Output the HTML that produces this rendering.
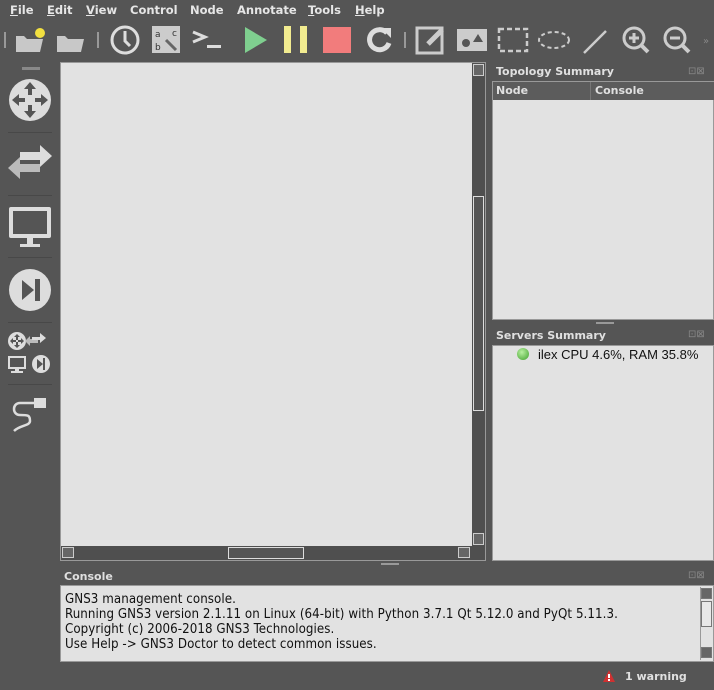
<!DOCTYPE html>
<html><head><style>
*{margin:0;padding:0;box-sizing:border-box}
body{width:714px;height:690px;background:#555;position:relative;overflow:hidden;font-family:"DejaVu Sans","Liberation Sans",sans-serif;color:#e8e8e8}
.a{position:absolute}
.menu{top:3px;font-size:11.5px;font-weight:bold;color:#e6e6e6}
.t{font-size:11px;font-weight:bold;color:#e0e0e0}
.con{font-family:"DejaVu Sans Condensed","DejaVu Sans","Liberation Sans",sans-serif;font-size:13.2px;letter-spacing:0.07px;color:#111;line-height:15px}
</style></head><body>
<div class="a menu" style="left:10px"><u>F</u>ile</div>
<div class="a menu" style="left:47px"><u>E</u>dit</div>
<div class="a menu" style="left:86px"><u>V</u>iew</div>
<div class="a menu" style="left:130px">Control</div>
<div class="a menu" style="left:190px">Node</div>
<div class="a menu" style="left:237px">Annotate</div>
<div class="a menu" style="left:308px"><u>T</u>ools</div>
<div class="a menu" style="left:355px"><u>H</u>elp</div>

<svg class="a" style="left:0;top:22px" width="714" height="38">
<g fill="#999"><rect x="4" y="10" width="2" height="16"/><rect x="97" y="10" width="2" height="16"/><rect x="404" y="10" width="2" height="16"/></g>
<path d="M16 14h8l3 3h16l-3 13H16z" fill="#c8c8c8"/><circle cx="40" cy="11" r="5" fill="#f2e040"/>
<path d="M57 14h8l3 3h16l-3 13H57z" fill="#c8c8c8"/>
<circle cx="125" cy="18" r="13" fill="none" stroke="#ddd" stroke-width="3"/><path d="M125 9v10l5 5" stroke="#ddd" stroke-width="3" fill="none"/>
<rect x="152" y="4" width="28" height="27" fill="#ccc"/><text x="155" y="15" font-size="9" fill="#333">a</text><text x="172" y="14" font-size="9" fill="#333">c</text><text x="155" y="28" font-size="9" fill="#333">b</text><path d="M166 18l10 10" stroke="#666" stroke-width="3"/>
<path d="M193 10l12 5-12 5" stroke="#ddd" stroke-width="3" fill="none"/><rect x="207" y="23" width="14" height="3" fill="#ddd"/>
<path d="M245 5l22 13-22 13z" fill="#7fcf8f"/>
<rect x="284" y="4" width="7" height="27" fill="#f2ec90"/><rect x="300" y="4" width="7" height="27" fill="#f2ec90"/>
<rect x="323" y="5" width="28" height="26" fill="#f27c7c"/>
<path d="M387 11a10 10 0 1 0 2 10" stroke="#ddd" stroke-width="5" fill="none"/><path d="M381 6l10 0 0 10z" fill="#ddd"/>
<rect x="417" y="6" width="25" height="25" fill="none" stroke="#ccc" stroke-width="3"/><path d="M428 22l14-14" stroke="#ccc" stroke-width="5"/>
<rect x="457" y="7" width="30" height="22" fill="#ccc"/><circle cx="466" cy="21" r="4" fill="#555"/><path d="M473 20l5-8 5 8z" fill="#555"/>
<rect x="499" y="7" width="28" height="22" fill="none" stroke="#ccc" stroke-width="2.5" stroke-dasharray="5 3"/>
<ellipse cx="554" cy="18" rx="15" ry="8" fill="none" stroke="#ccc" stroke-width="2" stroke-dasharray="4 3"/>
<path d="M584 31l22-22" stroke="#ccc" stroke-width="2.5"/>
<circle cx="634" cy="16" r="10" fill="none" stroke="#ccc" stroke-width="3"/><path d="M641 23l7 7" stroke="#ccc" stroke-width="4"/><path d="M629 16h10M634 11v10" stroke="#ccc" stroke-width="3"/>
<circle cx="675" cy="16" r="10" fill="none" stroke="#ccc" stroke-width="3"/><path d="M682 23l7 7" stroke="#ccc" stroke-width="4"/><path d="M670 16h10" stroke="#ccc" stroke-width="3"/>
<text x="703" y="22" font-size="10" fill="#888">»</text>
</svg>

<svg class="a" style="left:0;top:60px" width="60" height="390">
<rect x="22" y="7" width="18" height="3" fill="#888"/>
<circle cx="30" cy="40" r="21" fill="#ddd"/>
<g fill="#555"><path d="M30 22l6 7h-4v6h-4v-6h-4zM30 58l6-7h-4v-6h-4v6h-4zM12 40l7-6v4h6v4h-6v4zM48 40l-7-6v4h-6v4h6v4z"/></g>
<rect x="8" y="72" width="44" height="1" fill="#484848"/>
<path d="M20 92h20v-7l12 11-12 11v-7H20z" fill="#ddd"/><path d="M40 104H20v-7L8 108l12 11v-7h20z" fill="#bbb"/>
<rect x="8" y="135" width="44" height="1" fill="#484848"/>
<rect x="9" y="147" width="42" height="31" rx="2" fill="#ddd"/><rect x="13" y="151" width="34" height="23" fill="#555"/><rect x="27" y="178" width="6" height="6" fill="#ddd"/><rect x="20" y="184" width="20" height="3" fill="#ddd"/>
<rect x="8" y="197" width="44" height="1" fill="#484848"/>
<circle cx="30" cy="230" r="21" fill="#ddd"/><path d="M22 220l12 10-12 10z" fill="#555"/><rect x="35" y="219" width="5" height="22" fill="#555"/>
<rect x="8" y="262" width="44" height="1" fill="#484848"/>
<circle cx="17" cy="281" r="9" fill="#ddd"/><g fill="#555"><path d="M17 274l3 3h-2v3h-2v-3h-2zM17 288l3-3h-2v-3h-2v3h-2zM10 281l3-3v2h3v2h-3v2zM24 281l-3-3v2h-3v2h3v2z"/></g>
<path d="M38 279h-8v-3l-5 5 5 5v-3h8z" fill="#bbb"/><path d="M32 277h8v-4l6 5-6 5v-3h-8z" fill="#ddd"/>
<rect x="8" y="296" width="18" height="13" fill="#ddd"/><rect x="10" y="298" width="14" height="9" fill="#555"/><rect x="15" y="309" width="4" height="2" fill="#ddd"/><rect x="11" y="311" width="12" height="2" fill="#ddd"/>
<circle cx="41" cy="304" r="9" fill="#ddd"/><path d="M37 299l6 5-6 5z" fill="#555"/><rect x="43" y="298" width="2" height="12" fill="#555"/>
<rect x="8" y="324" width="44" height="1" fill="#484848"/>
<rect x="34" y="338" width="12" height="10" fill="#ddd"/><path d="M34 343h-14c-8 0-8 12 0 12c8 0 10 0 10 6c0 5-10 4-16 10" stroke="#ddd" stroke-width="2.5" fill="none"/>
</svg>

<div class="a" style="left:60px;top:62px;width:426px;height:499px;border:1px solid #999;background:#4f4f4f"></div>
<div class="a" style="left:61px;top:63px;width:411px;height:483px;background:#e2e2e2"></div>
<div class="a" style="left:473px;top:64px;width:11px;height:12px;border:1px solid #ccc;background:#666"></div>
<div class="a" style="left:473px;top:196px;width:11px;height:215px;border:1px solid #ddd;background:#555"></div>
<div class="a" style="left:473px;top:533px;width:11px;height:12px;border:1px solid #ccc;background:#666"></div>
<div class="a" style="left:62px;top:547px;width:12px;height:11px;border:1px solid #ccc;background:#666"></div>
<div class="a" style="left:228px;top:547px;width:76px;height:12px;border:1px solid #ddd;background:#555"></div>
<div class="a" style="left:458px;top:547px;width:12px;height:11px;border:1px solid #ccc;background:#666"></div>

<div class="a t" style="left:496px;top:65px">Topology Summary</div>
<div class="a" style="left:688px;top:66px;font-size:10px;color:#888">⊡⊠</div>
<div class="a" style="left:492px;top:81px;width:222px;height:239px;background:#e2e2e2;border:1px solid #999"></div>
<div class="a" style="left:493px;top:82px;width:221px;height:18px;background:#5c5c5c"></div>
<div class="a" style="left:590px;top:82px;width:1px;height:18px;background:#777"></div>
<div class="a t" style="left:496px;top:84px">Node</div>
<div class="a t" style="left:595px;top:84px">Console</div>
<div class="a" style="left:596px;top:322px;width:18px;height:2px;background:#999"></div>

<div class="a t" style="left:496px;top:329px">Servers Summary</div>
<div class="a" style="left:688px;top:329px;font-size:10px;color:#888">⊡⊠</div>
<div class="a" style="left:492px;top:345px;width:222px;height:216px;background:#e2e2e2;border:1px solid #999"></div>
<div class="a" style="left:517px;top:348px;width:12px;height:12px;border-radius:50%;background:radial-gradient(circle at 40% 35%,#b8f0a0,#3fa02c)"></div>
<div class="a" style="left:538px;top:347px;font-family:'Liberation Sans',sans-serif;font-size:13px;color:#111">ilex CPU 4.6%, RAM 35.8%</div>

<div class="a" style="left:381px;top:563px;width:18px;height:2px;background:#999"></div>
<div class="a t" style="left:64px;top:570px">Console</div>
<div class="a" style="left:688px;top:570px;font-size:10px;color:#888">⊡⊠</div>
<div class="a" style="left:60px;top:585px;width:654px;height:77px;background:#e2e2e2;border:1px solid #999"></div>
<div class="a con" style="left:65px;top:592px">GNS3 management console.<br>Running GNS3 version 2.1.11 on Linux (64-bit) with Python 3.7.1 Qt 5.12.0 and PyQt 5.11.3.<br>Copyright (c) 2006-2018 GNS3 Technologies.<br>Use Help -&gt; GNS3 Doctor to detect common issues.</div>
<div class="a" style="left:700px;top:587px;width:13px;height:73px;background:#e2e2e2;border-left:1px solid #999"></div>
<div class="a" style="left:701px;top:588px;width:11px;height:11px;border:1px solid #777;background:#666"></div>
<div class="a" style="left:701px;top:601px;width:11px;height:26px;border:1px solid #777;background:#e8e8e8"></div>
<div class="a" style="left:701px;top:647px;width:11px;height:11px;border:1px solid #777;background:#666"></div>

<svg class="a" style="left:602px;top:669px" width="14" height="14"><path d="M7 1l6 12H1z" fill="#d03030"/><rect x="6" y="5" width="2" height="4" fill="#fff"/><rect x="6" y="10" width="2" height="2" fill="#fff"/></svg>
<div class="a t" style="left:625px;top:670px">1 warning</div>
</body></html>
